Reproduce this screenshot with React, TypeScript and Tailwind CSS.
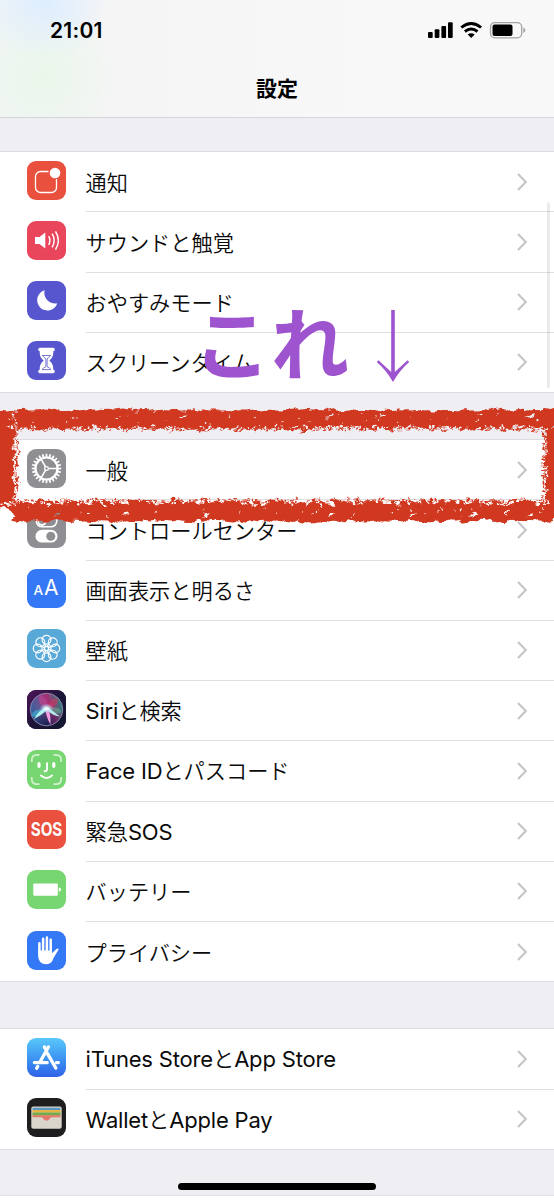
import type { ReactNode } from 'react';

const cjk = "font-['Noto_Sans_CJK_JP',sans-serif]";

function Tile({ className, children }: { className: string; children?: ReactNode }) {
  return (
    <div className={`h-[39px] w-[39px] shrink-0 overflow-hidden rounded-[9px] ${className}`}>
      <svg viewBox="0 0 39 39" className="block h-full w-full" fill="none" stroke="none">
        {children}
      </svg>
    </div>
  );
}

const ring = (n: number, offset = 0) => Array.from({ length: n }, (_, i) => (360 / n) * i + offset);

const NotificationIcon = () => (
  <Tile className="bg-[#e9503e]">
    <path d="M21.5 10.5H13.5a5 5 0 0 0-5 5v11a5 5 0 0 0 5 5h11a5 5 0 0 0 5-5v-8.5" stroke="#fff" strokeWidth="1.3" />
    <circle cx="28" cy="12" r="5.3" fill="#fff" />
  </Tile>
);
const SoundIcon = () => (
  <Tile className="bg-[#e9465c]">
    <path d="M8 16h4.5l5.8-4.6v16.2L12.500 23H8z" fill="#fff" />
    <path d="M21.700 15.200q2.500 4.300 0 8.600M25.100 12.700q4.200 6.800 0 13.600M28.500 10.300q5.600 9.200 0 18.400" stroke="#fff" strokeWidth="1.5" />
  </Tile>
);
const MoonIcon = () => (
  <Tile className="bg-[#5756ce]">
    <path d="M17.600 9.300A10.300 10.300 0 1 0 30.300 22.200 10.700 10.700 0 0 1 17.600 9.300z" fill="#fff" />
  </Tile>
);
const HourglassIcon = () => (
  <Tile className="bg-[#5756ce]">
    <path d="M11.200 8.500q0-1.700 1.700-1.700h13.200q1.700 0 1.700 1.700t-1.500 1.800C26.300 16 25 17 22.300 19.600 25 22 26.300 24 26.300 28.700q1.500.1 1.500 1.800t-1.700 1.700H12.900q-1.700 0-1.700-1.700t1.500-1.800C12.700 24 14 22 16.700 19.600 14 17 12.700 16 12.700 10.300q-1.500-.1-1.500-1.800z" fill="#fff" />
    <path d="M15.300 14.500h8.400q-1 1.500-3.600 3.200v8q2.600 1.200 3.900 2.900h-9q1.300-1.700 3.900-2.900v-8q-2.600-1.700-3.600-3.200z" stroke="#5756ce" strokeWidth=".8" />
  </Tile>
);
const GearIcon = () => (
  <Tile className="bg-[#8e8e93]">
    {ring(24).map((a) => (
      <path key={a} d="M18.500 8 18.700 4.700h1.600L20.500 8z" fill="#fff" transform={`rotate(${a} 19.500 19.500)`} />
    ))}
    <circle cx="19.500" cy="19.500" r="11" stroke="#fff" strokeWidth="2.200" />
    {[0, 120, 240].map((a) => (
      <path key={a} d="M21 19.500h10" stroke="#fff" strokeWidth="1.600" transform={`rotate(${a} 19.500 19.500)`} />
    ))}
    <circle cx="19.500" cy="19.500" r="1.900" stroke="#fff" strokeWidth="1.200" />
  </Tile>
);
const ControlIcon = () => (
  <Tile className="bg-[#8e8e93]">
    <rect x="9.300" y="6.400" width="20.500" height="11.400" rx="5.700" stroke="#fff" strokeWidth="1.600" />
    <circle cx="15" cy="12.100" r="3.900" stroke="#fff" strokeWidth="1.800" />
    <rect x="8.500" y="20.800" width="22" height="12.800" rx="6.400" fill="#fff" />
    <circle cx="23.800" cy="27.200" r="4.500" fill="#8e8e93" />
  </Tile>
);
const DisplayIcon = () => (
  <Tile className="bg-[#3478f6]">
    <text x="6.600" y="25.500" fontFamily="Inter" fontSize="13.500" fontWeight="500" fill="#fff">A</text>
    <text x="17" y="25.500" fontFamily="Inter" fontSize="21" fontWeight="400" fill="#fff">A</text>
  </Tile>
);
const WallpaperIcon = () => (
  <Tile className="bg-[#59a9d8]">
    {ring(8).map((a) => (
      <g key={a} transform={`rotate(${a} 19.500 19.500)`} stroke="#fff">
        <circle cx="19.500" cy="10.700" r="4.400" strokeWidth="1.200" />
        <path d="M19.500 17.500q-2.800-2-2.200-4.500M19.500 17.500q2.800-2 2.200-4.500" strokeWidth=".9" />
      </g>
    ))}
    <circle cx="19.500" cy="19.500" r="2.100" stroke="#fff" strokeWidth="1.200" />
  </Tile>
);
const SiriIcon = () => (
  <Tile className="bg-[#201437]">
    <defs>
      <linearGradient id="sbg" x1="0" y1="0" x2="1" y2="1">
        <stop stopColor="#51145b" /><stop offset=".5" stopColor="#1c1539" /><stop offset="1" stopColor="#10182e" />
      </linearGradient>
      <linearGradient id="orb" x1="0" y1=".7" x2="1" y2=".35">
        <stop stopColor="#2464a0" /><stop offset=".35" stopColor="#665491" /><stop offset=".65" stopColor="#a62f73" /><stop offset="1" stopColor="#21877e" />
      </linearGradient>
      <radialGradient id="dark" cx=".5" cy="1" r=".6">
        <stop stopColor="#131c4c" /><stop offset="1" stopColor="#131c4c" stopOpacity="0" />
      </radialGradient>
      <radialGradient id="glow">
        <stop stopColor="#fff" /><stop offset=".3" stopColor="#dff" stopOpacity=".85" /><stop offset="1" stopColor="#9cf" stopOpacity="0" />
      </radialGradient>
    </defs>
    <rect width="39" height="39" fill="url(#sbg)" />
    <circle cx="19.500" cy="19.500" r="16.200" fill="url(#orb)" />
    <circle cx="19.500" cy="19.500" r="16.200" fill="url(#dark)" />
    <path d="M13 5Q23 9 20 19 9 14 13 5z" fill="#e6459a" opacity=".4" />
    <path d="M20 19Q5 18 4.500 26q6 3 15.500-7z" fill="#45d5ed" opacity=".5" />
    <path d="M20 19Q22 9 30 8q5 6-10 11z" fill="#dd315e" opacity=".5" />
    <path d="M20 19q11-4 14 2-1 6-14-2z" fill="#55e2a4" opacity=".4" />
    <path d="M19 17q-8 4-12 12 8-4 13-9M20 17q6 4 13 9.500-8-1-13-6.500" fill="#b9fff5" opacity=".9" />
    <path d="M18.500 19q.5 8 5 15.500.5-9-2-15.500z" fill="#ef9bdc" />
    <ellipse cx="19.500" cy="18.500" rx="7.500" ry="5" fill="url(#glow)" />
    <circle cx="19.500" cy="19.500" r="16.300" stroke="#a798bd" strokeWidth=".9" opacity=".85" />
  </Tile>
);
const FaceIcon = () => (
  <Tile className="bg-[#77d572]">
    <path d="M4.800 12V10q0-5.200 5.200-5.200h2.500M26.500 4.800H29q5.200 0 5.200 5.200v2M34.200 27v2q0 5.200-5.200 5.200h-2.500M12.500 34.200H10q-5.200 0-5.200-5.200v-2" stroke="#d2f2ce" strokeWidth="1.700" />
    <path d="M12 13.700v2.600M26.800 13.700v2.600" stroke="#fff" strokeWidth="3.200" strokeLinecap="round" />
    <path d="M20 13.200v6q0 2-2.400 2.100M14 25.500q5.500 5 11 0" stroke="#fff" strokeWidth="1.900" strokeLinecap="round" />
  </Tile>
);
const SosIcon = () => (
  <Tile className="bg-[#e9503e]">
    <g transform="translate(19.500 26.400) scale(.81 1)">
      <text textAnchor="middle" fontFamily="Inter" fontSize="18.800" fontWeight="700" fill="#fff">SOS</text>
    </g>
  </Tile>
);
const BatteryIcon = () => (
  <Tile className="bg-[#77d572]">
    <rect x="6.300" y="13.500" width="24.500" height="12.200" rx=".8" fill="#fff" />
    <path d="M31.800 17.500q2.300.4 2.300 2.100t-2.300 2.100z" fill="#fff" />
  </Tile>
);
const HandIcon = () => (
  <Tile className="bg-[#3478f6]">
    <path d="M12.400 12.300v11M16.100 7.800v14M19.900 6.600v14M23.700 8.800v14" stroke="#fff" strokeWidth="2.500" strokeLinecap="round" />
    <path d="M11.150 19.500h13.800v2.800l4.500-4.300q1.700-1 2.300.2l-5.200 8.800q-1.800 6.200-7.100 6.200-8.300 0-8.300-8.400z" fill="#fff" />
  </Tile>
);
const StoreIcon = () => (
  <Tile className="bg-linear-to-b from-[#5ac8fa] to-[#3060e8]">
    <g stroke="#fff" strokeLinecap="round" strokeWidth="3.400">
      <path d="M21.400 9 13 24" /><path d="M7.400 24.600h12.800M29.500 24.600h1.800" /><path d="m10.700 28.500-1 1.700" />
      <path d="m17.400 9 .8 1.500M20.200 15.200l8.600 14.800" />
    </g>
  </Tile>
);
const WalletIcon = () => (
  <Tile className="bg-[#1e1e1e]">
    <rect x="4.300" y="8.500" width="30.400" height="22.300" rx="2" fill="#d9d5cb" />
    <path d="M5.500 12v-1q0-1.200 1.200-1.200h25.600q1.200 0 1.200 1.200v1z" fill="#5897c4" />
    <path d="M5.500 12h28v2.500h-28z" fill="#e5b343" />
    <path d="M5.500 14.500h28v3.100h-28z" fill="#72ac4a" />
    <path d="M5.500 17.300h28v2h-28z" fill="#e5786a" />
    <path d="M13.500 18.700q1.300 0 2.200 1.300 1.700 2.700 3.800 2.700t3.800-2.700q.9-1.300 2.200-1.300z" fill="#e5786a" />
  </Tile>
);

const Latin = ({ children }: { children: ReactNode }) => (
  <span className="font-['Inter'] text-[22px] font-normal tracking-[-0.18px]">{children}</span>
);

function Row({ icon, first, children }: { icon: ReactNode; first?: boolean; children: ReactNode }) {
  return (
    <div className="flex h-[60.25px] pl-[26.500px]">
      <div className="pt-[9.600px]">{icon}</div>
      <div className={`ml-5 flex flex-1 items-center justify-between border-t pr-[26px] ${first ? 'border-transparent' : 'border-[#e0e0e3]'}`}>
        <span className={`${cjk} text-[21.200px] leading-[30px] font-[350] whitespace-nowrap text-[#0a0a0a]`}>{children}</span>
        <svg width="12" height="20" viewBox="0 0 12 20" fill="none">
          <path d="m2 2 7.800 8L2 18" stroke="#c6c6ca" strokeWidth="2.200" />
        </svg>
      </div>
    </div>
  );
}

const Section = ({ className, children }: { className?: string; children: ReactNode }) => (
  <section className={`bg-white pb-px shadow-[inset_0_1px_#dddde1,inset_0_-1px_#dddde1] ${className ?? ''}`}>{children}</section>
);

// Seeded generator keeps the chalk texture stable between renders.
function seeded(seed: number) {
  let s = seed;
  return () => {
    s = (s * 1664525 + 1013904223) % 4294967296;
    return s / 4294967296;
  };
}

function dab(x: number, y: number, len: number, w: number, angle: number) {
  const dx = Math.cos(angle) * len;
  const dy = Math.sin(angle) * len;
  const nx = -Math.sin(angle) * w;
  const ny = Math.cos(angle) * w;
  const p = (n: number) => n.toFixed(1);
  return `M${p(x - dx)} ${p(y - dy)}Q${p(x + nx * 2)} ${p(y + ny * 2)} ${p(x + dx)} ${p(y + dy)}Q${p(x - nx * 2)} ${p(y - ny * 2)} ${p(x - dx)} ${p(y - dy)}z`;
}

function chalk() {
  const r = seeded(81);
  let ink = '';
  let holes = '';
  for (let x = 2; x < 556; x += 3.3) {
    const a = -0.1 - r() * 0.6;
    ink += dab(x, 411.5 + r() * 2, 3 + r() * 3, 1.2 + r() * 1.5, a);
    ink += dab(x, 426 + r() * 2, 2 + r() * 3, 1 + r() * 1.5, a);
    ink += dab(x + r() * 2, 428 + r() * 2.5, 0.6 + r() * 1.6, 0.6 + r() * 0.8, a);
    if (x > 14) {
      ink += dab(x, 518 + r() * 2, 3 + r() * 3, 1.2 + r() * 1.5, a * 0.6);
      ink += dab(x, 502 + r() * 2, 2 + r() * 3, 1 + r() * 1.3, -a * 1.5);
      ink += dab(x + r() * 2, 499.5 + r() * 2.5, 1 + r() * 2, 0.5 + r() * 0.7, -a * 1.8);
    }
    if (r() > 0.35) holes += dab(x, 426 + r() * 3, 0.8 + r() * 1.7, 0.7 + r(), a);
    if (r() > 0.35) holes += dab(x, 501 + r() * 3.5, 0.8 + r() * 2.4, 0.7 + r(), -a);
    if (r() > 0.85) holes += dab(x, 414 + r() * 9, 0.5 + r() * 1, 0.4 + r() * 0.6, -0.4);
    if (r() > 0.85) holes += dab(x, 507 + r() * 10, 0.5 + r() * 1, 0.4 + r() * 0.6, 0.5);
  }
  for (const x of [183, 330, 384, 530]) holes += dab(x, 416, 5, 1.1, -0.25);
  for (const x of [58, 126, 205, 331, 412, 473, 530]) holes += dab(x, 515, 4.5, 1.1, -0.35);
  for (let y = 414; y < 506; y += 2.4) {
    ink += dab(14.5 + r() * 3.5, y, 0.8 + r() * 1.8, 0.7 + r(), r() * 3);
    holes += dab(13.5 + r() * 3, y, 0.7 + r() * 1.3, 0.6 + r() * 0.6, r() * 3);
    if (y > 428) {
      ink += dab(542.5 + r() * 3.5, y, 0.8 + r() * 1.8, 0.7 + r(), r() * 3);
      holes += dab(543.500 + r() * 4, y, 0.7 + r() * 1.3, 0.6 + r() * 0.6, r() * 3);
    }
  }
  return { ink, holes };
}

const texture = chalk();

function ChalkFrame() {
  return (
    <svg viewBox="0 400 554 130" className="pointer-events-none absolute top-[400px] left-0 h-[130px] w-[554px]">
      <filter id="rough" filterUnits="userSpaceOnUse" x="-10" y="400" width="574" height="130" colorInterpolationFilters="sRGB">
        <feTurbulence type="fractalNoise" baseFrequency=".1 .16" numOctaves="2" seed="7" />
        <feDisplacementMap in="SourceGraphic" scale="8" xChannelSelector="R" yChannelSelector="G" />
      </filter>
      <mask id="grain" maskUnits="userSpaceOnUse" x="-10" y="400" width="574" height="130">
        <rect x="-10" y="400" width="574" height="130" fill="#fff" />
        <path d={texture.holes} fill="#000" />
      </mask>
      <g filter="url(#rough)">
        <g mask="url(#grain)" fill="#d13820">
          <path d="M-10 412 3 410.500H564V427.500H14.500V502H564V519H16L12 510 5 507-10 511z" />
          <path d="M544.500 424H564v84h-19.500z" />
          <path d={texture.ink} />
        </g>
      </g>
    </svg>
  );
}

function StatusIcons() {
  return (
    <svg width="102" height="22" viewBox="425 19 102 22" className="shrink-0">
      <g fill="#000">
        <rect x="428" y="32" width="4.700" height="6" rx="1" />
        <rect x="434.700" y="29.300" width="4.700" height="8.700" rx="1" />
        <rect x="441.400" y="26" width="4.700" height="12" rx="1" />
        <rect x="448" y="22.300" width="4.700" height="15.700" rx="1" />
        <path d="m471.200 38-3.500-3.500q3.500-2.500 7 0z" />
      </g>
      <path d="M461.300 27.500q9.900-8.200 19.800 0M464.900 31.500q6.300-5 12.600 0" fill="none" stroke="#000" strokeWidth="2.900" />
      <rect x="490.500" y="22.600" width="31.200" height="15.200" rx="4.300" fill="none" stroke="#a3a3a3" strokeWidth="1.300" />
      <rect x="492.500" y="24.500" width="20" height="11.400" rx="2" />
      <path d="M523.300 27.500q2 .6 2 2.700t-2 2.700z" fill="#a3a3a3" />
    </svg>
  );
}

export default function App() {
  return (
    <div className="relative h-[1200px] w-[554px] overflow-hidden bg-white">
      <div className="h-[1196px] border-b border-[#e2e2e6] bg-[#eeeef3]">
        <header className="h-[118px] border-b border-[#d6d6da] bg-[radial-gradient(ellipse_65px_60px_at_45px_0px,#ddedff,transparent),radial-gradient(ellipse_75px_75px_at_45px_78px,#eaf6ea,transparent),linear-gradient(90deg,#f1f5f5,#f5f5f5_22%,#f8f8f8_65%)]">
          <div className="flex h-[60px] items-center justify-between pr-[27px] pl-[50px]">
            <span className="pt-px font-['Inter'] text-[21px] leading-6 font-semibold tracking-[0.25px]">21:01</span>
            <StatusIcons />
          </div>
          <h1 className={`${cjk} pt-[12px] text-center text-[21px] leading-[30px] font-bold text-black`}>設定</h1>
        </header>
        <main className="pt-[33px]">
          <Section>
            <Row first icon={<NotificationIcon />}>通知</Row>
            <Row icon={<SoundIcon />}>サウンドと触覚</Row>
            <Row icon={<MoonIcon />}>おやすみモード</Row>
            <Row icon={<HourglassIcon />}>スクリーンタイム</Row>
          </Section>
          <Section className="mt-[46px]">
            <Row first icon={<GearIcon />}>一般</Row>
            <Row icon={<ControlIcon />}>コントロールセンター</Row>
            <Row icon={<DisplayIcon />}>画面表示と明るさ</Row>
            <Row icon={<WallpaperIcon />}>壁紙</Row>
            <Row icon={<SiriIcon />}><Latin>Siri</Latin>と検索</Row>
            <Row icon={<FaceIcon />}><Latin>Face ID</Latin>とパスコード</Row>
            <Row icon={<SosIcon />}>緊急<Latin>SOS</Latin></Row>
            <Row icon={<BatteryIcon />}>バッテリー</Row>
            <Row icon={<HandIcon />}>プライバシー</Row>
          </Section>
          <Section className="mt-[46px]">
            <Row first icon={<StoreIcon />}><Latin>iTunes Store</Latin>と<Latin>App Store</Latin></Row>
            <Row icon={<WalletIcon />}><Latin>Wallet</Latin>と<Latin>Apple Pay</Latin></Row>
          </Section>
        </main>
      </div>
      <div className="absolute top-[202px] left-[547px] h-[186px] w-[3px] rounded-full bg-black/8" />
      <div className="absolute top-[1182.500px] left-[178px] h-[7px] w-[198px] rounded-full bg-black" />
      <div className={`${cjk} absolute top-[295px] left-[193px] flex text-[78px] leading-[90px] font-bold text-[#9f54cf]`}>これ</div>
      <svg viewBox="0 0 36 74" className="absolute top-[309px] left-[375px] h-[74px] w-[36px]">
        <path d="M16.200 1h3.600v62L32.500 51.300l1.700 1.800Q25 61 18 73 11 61 1.800 53.100l1.700-1.800L16.200 63z" fill="#9f54cf" />
      </svg>
      <ChalkFrame />
    </div>
  );
}
